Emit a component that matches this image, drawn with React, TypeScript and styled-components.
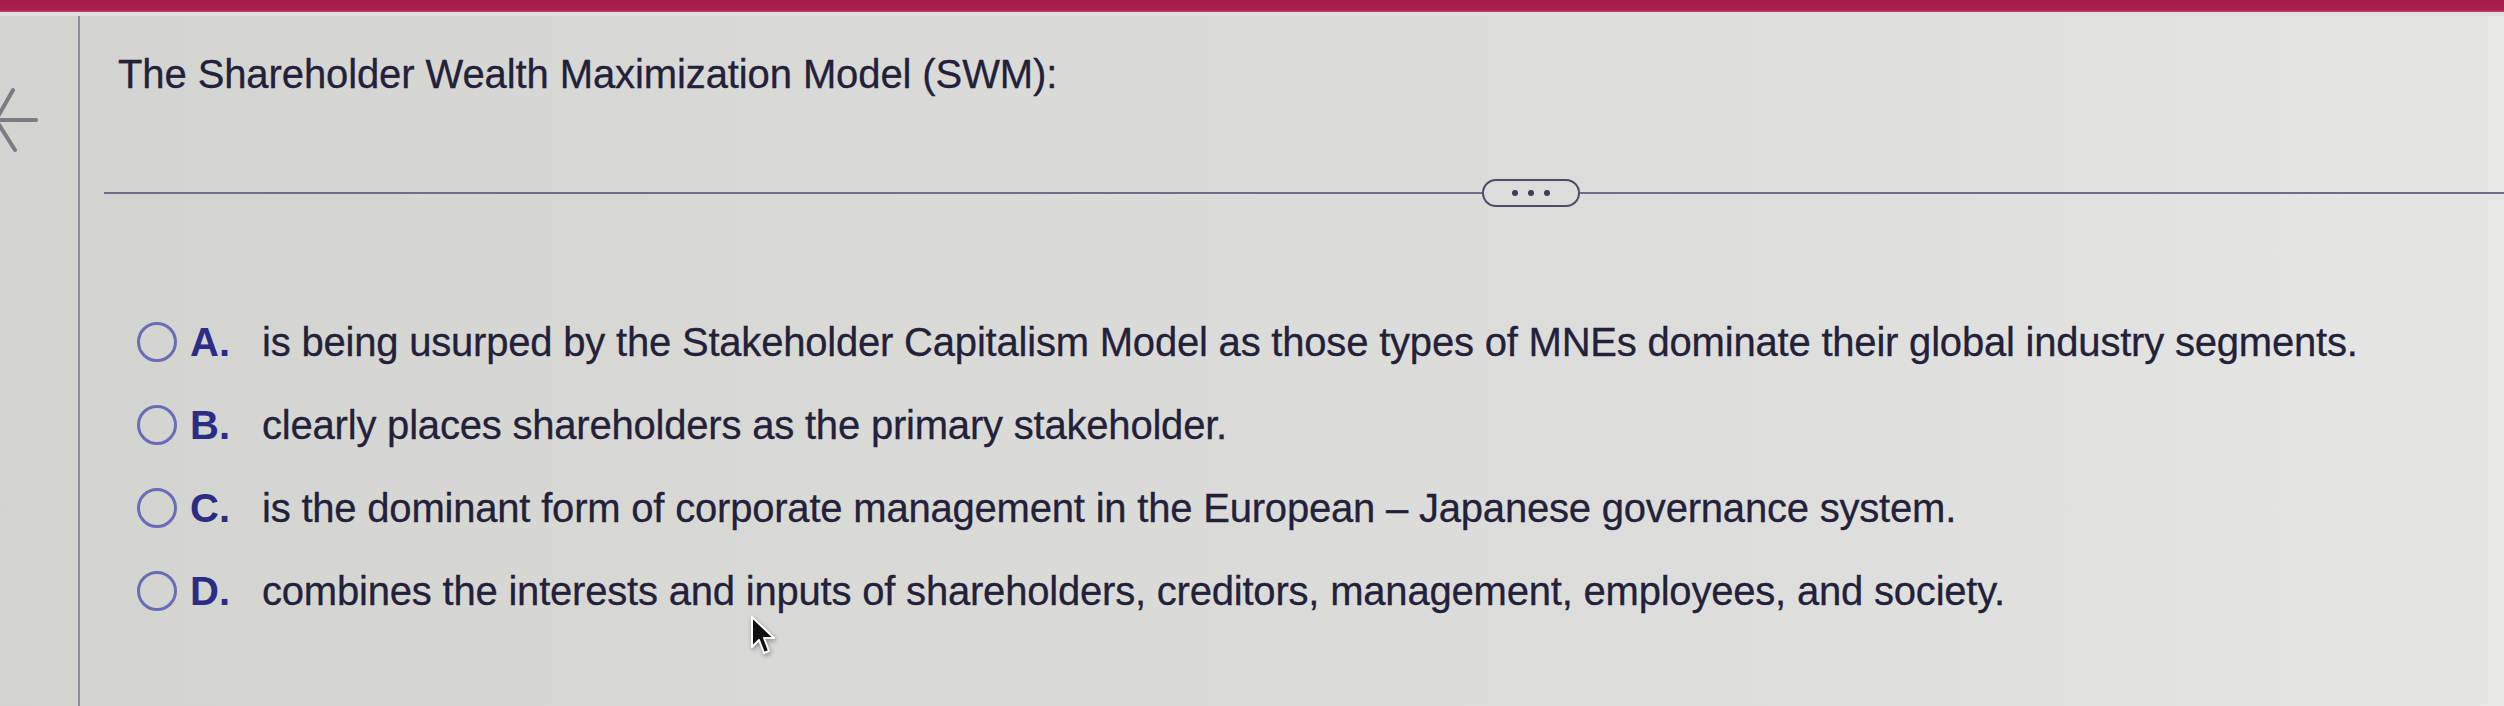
import React from "react";
import styled, { createGlobalStyle } from "styled-components";

const GlobalStyle = createGlobalStyle`
  html, body {
    margin: 0;
    padding: 0;
    background: #d9d9d6;
  }
  * { box-sizing: border-box; }
`;

const Page = styled.div`
  position: relative;
  width: 2504px;
  height: 706px;
  overflow: hidden;
  display: flex;
  flex-direction: column;
  font-family: "Liberation Sans", Arial, sans-serif;
  background: linear-gradient(90deg, #d3d3d0 0%, #d9d9d6 35%, #dddddb 70%, #e6e6e4 100%);
`;

const TopBar = styled.div`
  flex: 0 0 16px;
  background: linear-gradient(180deg, #a51d4b 0%, #ad2150 80%, #b8456a 100%);
  border-bottom: 4px solid #e3e1e2;
`;

const Body = styled.div`
  flex: 1;
  display: flex;
  min-height: 0;
`;

const Sidebar = styled.aside`
  flex: 0 0 80px;
  border-right: 2px solid #8e8e9c;
  overflow: hidden;
  padding-top: 69px;
`;

const BackIcon = styled.svg`
  display: block;
  width: 40px;
  height: 70px;
`;

const Main = styled.main`
  flex: 1;
  padding-left: 24px;
  display: flex;
  flex-direction: column;
`;

const Title = styled.h1`
  margin: 35px 0 0 14px;
  font-size: 40px;
  line-height: 46px;
  font-weight: 400;
  color: #22203a;
  letter-spacing: -0.1px;
  -webkit-text-stroke: 0.3px #22203a;
`;

const DividerRow = styled.div`
  margin-top: 82px;
  height: 28px;
  display: flex;
  align-items: center;
`;

const Rule = styled.div<{ $width?: number }>`
  height: 2px;
  background: #6e6e88;
  flex: ${(p) => (p.$width ? `0 0 ${p.$width}px` : "1")};
`;

const MorePill = styled.button`
  flex: 0 0 98px;
  height: 28px;
  border: 2.5px solid #4c4c68;
  border-radius: 14px;
  background: transparent;
  display: flex;
  align-items: center;
  justify-content: center;
  gap: 10px;
  padding: 0;
`;

const Dot = styled.span`
  width: 6px;
  height: 6px;
  border-radius: 50%;
  background: #3c3c58;
`;

const Options = styled.ul`
  list-style: none;
  margin: 112px 0 0 0;
  padding: 0 0 0 33px;
  display: flex;
  flex-direction: column;
  gap: 37px;
`;

const OptionRow = styled.li`
  display: flex;
  align-items: center;
  height: 46px;
`;

const Radio = styled.span`
  flex: 0 0 40px;
  width: 40px;
  height: 40px;
  border-radius: 50%;
  border: 3.5px solid #6a6db6;
  margin-right: 13px;
`;

const Letter = styled.span`
  flex: 0 0 72px;
  font-size: 40px;
  line-height: 46px;
  font-weight: 700;
  color: #2b2d84;
`;

const OptionText = styled.span`
  font-size: 40px;
  line-height: 46px;
  color: #23213a;
  white-space: nowrap;
  letter-spacing: -0.2px;
  -webkit-text-stroke: 0.3px #23213a;
`;

const Cursor = styled.svg`
  position: absolute;
  left: 750px;
  top: 615px;
  width: 28px;
  height: 42px;
  filter: drop-shadow(1px 2px 2px rgba(0, 0, 0, 0.35));
`;

const options = [
  {
    letter: "A.",
    text: "is being usurped by the Stakeholder Capitalism Model as those types of MNEs dominate their global industry segments.",
  },
  { letter: "B.", text: "clearly places shareholders as the primary stakeholder." },
  {
    letter: "C.",
    text: "is the dominant form of corporate management in the European \u2013 Japanese governance system.",
  },
  {
    letter: "D.",
    text: "combines the interests and inputs of shareholders, creditors, management, employees, and society.",
  },
];

export default function App() {
  return (
    <>
      <GlobalStyle />
      <Page>
        <TopBar />
        <Body>
          <Sidebar>
            <BackIcon viewBox="0 0 40 70">
              <g stroke="#7b7b84" strokeWidth="4" strokeLinecap="round" fill="none">
                <line x1="-4" y1="35" x2="36" y2="35" />
                <line x1="-4" y1="35" x2="13" y2="5" />
                <line x1="-4" y1="35" x2="15" y2="65" />
              </g>
            </BackIcon>
          </Sidebar>
          <Main>
            <Title>The Shareholder Wealth Maximization Model (SWM):</Title>
            <DividerRow>
              <Rule $width={1378} />
              <MorePill aria-label="more">
                <Dot />
                <Dot />
                <Dot />
              </MorePill>
              <Rule />
            </DividerRow>
            <Options>
              {options.map((o) => (
                <OptionRow key={o.letter}>
                  <Radio />
                  <Letter>{o.letter}</Letter>
                  <OptionText>{o.text}</OptionText>
                </OptionRow>
              ))}
            </Options>
          </Main>
        </Body>
        <Cursor viewBox="0 0 14 21">
          <path
            d="M1 1 L1 16 L4.5 12.5 L7 19 L9.5 18 L7 11.5 L12 11.5 Z"
            fill="#111"
            stroke="#fff"
            strokeWidth="1"
            strokeLinejoin="round"
          />
        </Cursor>
      </Page>
    </>
  );
}
